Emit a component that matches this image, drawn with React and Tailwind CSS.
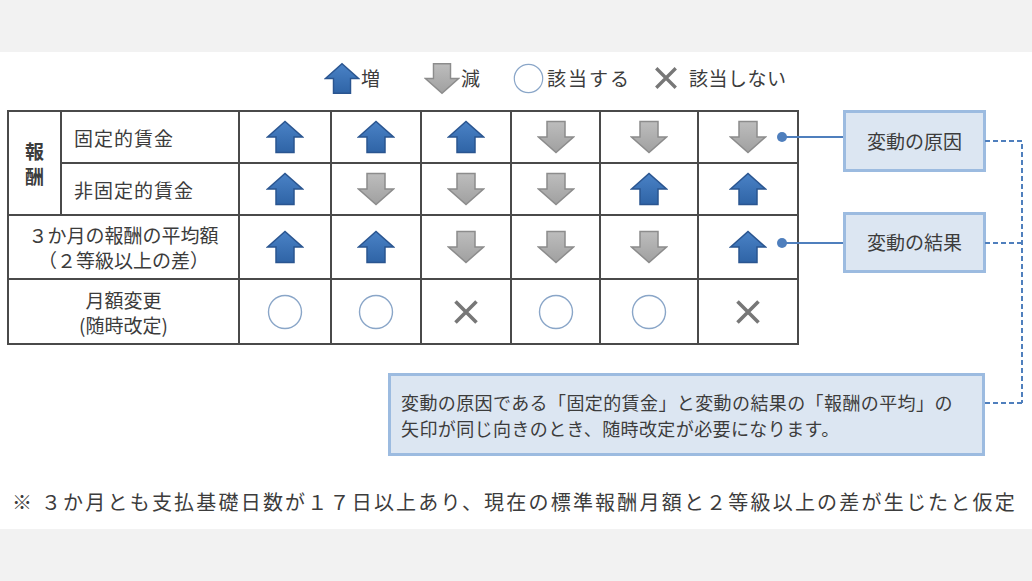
import React from "react";

function UpArrow({ w = 38, h = 34 }) {
  return (
    <svg width={w} height={h} viewBox="0 0 38 34">
      <defs>
        <linearGradient id="upg" x1="0" y1="0" x2="0" y2="1">
          <stop offset="0" stopColor="#4a82c6" />
          <stop offset="1" stopColor="#2f64a6" />
        </linearGradient>
      </defs>
      <path
        d="M1.5 17 L19 1.5 L36.5 17 L28 17 L28 32.5 L10 32.5 L10 17 Z"
        fill="url(#upg)"
        stroke="#2a5590"
        strokeWidth="1.5"
      />
    </svg>
  );
}

function DownArrow({ w = 38, h = 34 }) {
  return (
    <svg width={w} height={h} viewBox="0 0 38 34">
      <defs>
        <linearGradient id="dng" x1="0" y1="0" x2="0" y2="1">
          <stop offset="0" stopColor="#bdbdbd" />
          <stop offset="1" stopColor="#a0a0a0" />
        </linearGradient>
      </defs>
      <path
        d="M10 1.5 L28 1.5 L28 17 L36.5 17 L19 32.5 L1.5 17 L10 17 Z"
        fill="url(#dng)"
        stroke="#8c8c8c"
        strokeWidth="1.5"
      />
    </svg>
  );
}

function Circle({ size = 36 }) {
  return (
    <svg width={size} height={size} viewBox="0 0 36 36">
      <circle cx="18" cy="18" r="16.5" fill="none" stroke="#8aa6c8" strokeWidth="1.4" />
    </svg>
  );
}

function Cross({ size = 28 }) {
  return (
    <svg width={size} height={size} viewBox="0 0 28 28">
      <path d="M3.5 3.5 L24.5 24.5 M24.5 3.5 L3.5 24.5" stroke="#777777" strokeWidth="3.6" />
    </svg>
  );
}

const mark = (m) => {
  if (m === "u") return <UpArrow />;
  if (m === "d") return <DownArrow />;
  if (m === "o") return <Circle />;
  return <Cross />;
};

const rows = [
  ["u", "u", "u", "d", "d", "d"],
  ["u", "d", "d", "d", "u", "u"],
  ["u", "u", "d", "d", "d", "u"],
  ["o", "o", "x", "o", "o", "x"],
];

function Cells({ marks }) {
  return marks.map((m, i) => (
    <td key={i} className="border-2 border-[#4a4a4a] p-0">
      <div className="flex items-center justify-center">{mark(m)}</div>
    </td>
  ));
}

export default function App() {
  return (
    <div className="w-[1032px] h-[581px] bg-[#f2f2f2] text-[#3c3c3c] font-['Noto_Sans_CJK_JP',sans-serif]">
      <div className="h-[52px]" />
      <div className="relative h-[477px] bg-white pt-[8px]">
        {/* legend */}
        <div className="flex items-center h-[36px] ml-[324px] text-[19px]">
          <UpArrow w={36} h={35} />
          <span className="ml-[1px]">増</span>
          <span className="ml-[44px]"><DownArrow w={36} h={35} /></span>
          <span className="ml-[1px]">減</span>
          <span className="ml-[33px]"><Circle size={31} /></span>
          <span className="ml-[3px] tracking-[2px]">該当する</span>
          <span className="ml-[22px]"><Cross size={26} /></span>
          <span className="ml-[10px] tracking-[0.5px]">該当しない</span>
        </div>

        <div className="flex mt-[14px]">
          <table className="ml-[7px] border-collapse table-fixed w-[790px] text-[19px] leading-[25px]">
            <colgroup>
              <col className="w-[53px]" />
              <col className="w-[178px]" />
              <col className="w-[92px]" />
              <col className="w-[90px]" />
              <col className="w-[90px]" />
              <col className="w-[89px]" />
              <col className="w-[98px]" />
              <col className="w-[100px]" />
            </colgroup>
            <tbody>
              <tr className="h-[52px]">
                <td rowSpan={2} className="border-2 border-[#4a4a4a] p-0 text-center font-bold">
                  <div>報</div>
                  <div>酬</div>
                </td>
                <td className="border-2 border-[#4a4a4a] pl-[12px] tracking-[1px]">固定的賃金</td>
                <Cells marks={rows[0]} />
              </tr>
              <tr className="h-[52px]">
                <td className="border-2 border-[#4a4a4a] pl-[12px] tracking-[1px]">非固定的賃金</td>
                <Cells marks={rows[1]} />
              </tr>
              <tr className="h-[64px]">
                <td colSpan={2} className="border-2 border-[#4a4a4a] p-0 text-center">
                  <div>３か月の報酬の平均額</div>
                  <div>（２等級以上の差）</div>
                </td>
                <Cells marks={rows[2]} />
              </tr>
              <tr className="h-[65px]">
                <td colSpan={2} className="border-2 border-[#4a4a4a] p-0 text-center">
                  <div>月額変更</div>
                  <div>(随時改定)</div>
                </td>
                <Cells marks={rows[3]} />
              </tr>
            </tbody>
          </table>

          <div className="ml-[44px] flex flex-col gap-[40px] text-[19px]">
            <div className="w-[143px] h-[62px] flex items-center justify-center bg-[#dce6f2] border-[3px] border-[#9cbbe0]">
              変動の原因
            </div>
            <div className="w-[143px] h-[61px] flex items-center justify-center bg-[#dce6f2] border-[3px] border-[#9cbbe0]">
              変動の結果
            </div>
          </div>
        </div>

        <div className="ml-[388px] mt-[28px] w-[597px] h-[83px] bg-[#dce6f2] border-[3px] border-[#9cbbe0] pl-[10px] pt-[13px] text-[18px] leading-[26px] tracking-[0.4px]">
          <div>変動の原因である「固定的賃金」と変動の結果の「報酬の平均」の</div>
          <div>矢印が同じ向きのとき、随時改定が必要になります。</div>
        </div>

        <div className="ml-[12px] mt-[34px] text-[20px] leading-[24px] tracking-[2.2px] whitespace-nowrap">
          ※ ３か月とも支払基礎日数が１７日以上あり、現在の標準報酬月額と２等級以上の差が生じたと仮定
        </div>

        {/* connectors */}
        <svg className="absolute inset-0 pointer-events-none" width="1032" height="477">
          <g stroke="#4f7fbd" strokeWidth="2" fill="none">
            <line x1="782" y1="85" x2="843" y2="85" />
            <line x1="782" y1="191" x2="843" y2="191" />
          </g>
          <circle cx="782" cy="85" r="5" fill="#4f7fbd" />
          <circle cx="782" cy="191" r="5" fill="#4f7fbd" />
          <g stroke="#4f7fbd" strokeWidth="2" fill="none" strokeDasharray="5 3">
            <path d="M985 89 H1022 V351" />
            <path d="M985 191 H1022" />
            <path d="M985 351 H1022" />
          </g>
        </svg>
      </div>
    </div>
  );
}
